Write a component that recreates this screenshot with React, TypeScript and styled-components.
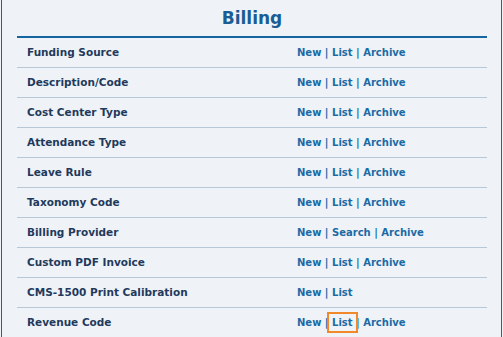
import React from 'react'
import styled, { createGlobalStyle } from 'styled-components'

/* ───── global ───── */
const Global = createGlobalStyle`
  html, body { margin: 0; padding: 0; background: #eff3f7; }
  body { font-family: "DejaVu Sans", Verdana, sans-serif; }
`

/* ───── layout ───── */
const Frame = styled.main`
  margin: 0 1px;
  height: 337px;
  box-sizing: border-box;
  border-left: 1px solid #1f64a0;
  border-right: 1px solid #1f64a0;
  background: #eff3f7;
  padding: 0 14px 0 15px;
  overflow: hidden;
`

const Title = styled.h2`
  margin: 0;
  height: 36px;
  display: flex;
  align-items: center;
  justify-content: center;
  font-size: 17px;
  font-weight: 700;
  color: #1a5c94;
  border-bottom: 2px solid #1565a0;
`

const Row = styled.div`
  display: grid;
  grid-template-columns: 270px 1fr;
  align-items: center;
  height: 29px;
  border-bottom: 1px solid #b7c7d6;
  font-weight: 700;
`

const Label = styled.span`
  padding: 0 0 2px 10px;
  font-size: 10.5px;
  line-height: 12px;
  color: #1f3a5c;
`

const Links = styled.span`
  padding-left: 10px;
  font-size: 10px;
  line-height: 12px;
  color: #1b6aa5;
  white-space: pre;
`

const Link = styled.a<{ $mark?: boolean }>`
  color: #1b6aa5;
  text-decoration: none;
  position: relative;
  ${({ $mark }) => $mark && `
    &::after{
      content:''; position:absolute;
      left:-5px; right:-5px; top:-5px; bottom:-5px;
      border:2px solid #f0892a;
    }
  `}
`

/* ───── data ───── */
type Item = { name: string; links: string[]; mark?: string }

const items: Item[] = [
  { name: 'Funding Source', links: ['New', 'List', 'Archive'] },
  { name: 'Description/Code', links: ['New', 'List', 'Archive'] },
  { name: 'Cost Center Type', links: ['New', 'List', 'Archive'] },
  { name: 'Attendance Type', links: ['New', 'List', 'Archive'] },
  { name: 'Leave Rule', links: ['New', 'List', 'Archive'] },
  { name: 'Taxonomy Code', links: ['New', 'List', 'Archive'] },
  { name: 'Billing Provider', links: ['New', 'Search', 'Archive'] },
  { name: 'Custom PDF Invoice', links: ['New', 'List', 'Archive'] },
  { name: 'CMS-1500 Print Calibration', links: ['New', 'List'] },
  { name: 'Revenue Code', links: ['New', 'List', 'Archive'], mark: 'List' },
]

export default function App() {
  return (
    <>
      <Global />
      <Frame>
        <Title>Billing</Title>
        {items.map(it => (
          <Row key={it.name}>
            <Label>{it.name}</Label>
            <Links>
              {it.links.map((l, i) => (
                <React.Fragment key={l}>
                  {i > 0 && ' | '}
                  <Link href="#" $mark={it.mark === l}>{l}</Link>
                </React.Fragment>
              ))}
            </Links>
          </Row>
        ))}
      </Frame>
    </>
  )
}
